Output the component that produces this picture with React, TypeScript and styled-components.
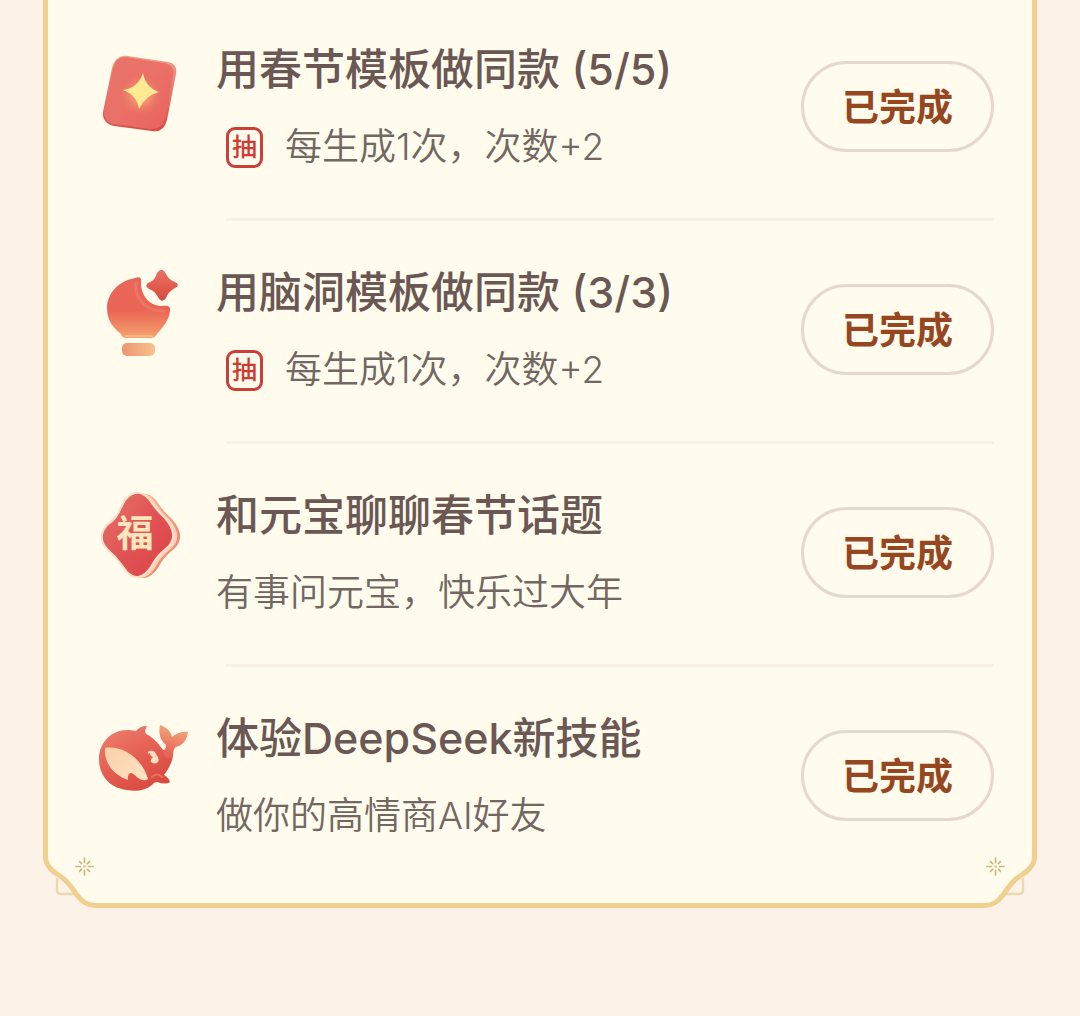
import React from "react";
import styled, { createGlobalStyle } from "styled-components";

const GlobalStyle = createGlobalStyle`
  *, *::before, *::after { box-sizing: border-box; }
  body {
    margin: 0;
    background: #fdf2e8;
    font-family: Inter, "Noto Sans CJK SC", sans-serif;
  }
`;

const Page = styled.main`
  padding: 0 43px 108px;
`;

const Card = styled.section`
  display: flex;
  flex-direction: column;
`;

const TaskList = styled.ul`
  margin: 0;
  padding: 0 38px 0 44px;
  list-style: none;
  background: #fffced;
  border: solid #f0cf8f;
  border-width: 0 5px;
`;

const TaskItem = styled.li`
  padding-top: 42px;

  &:first-child { padding-top: 40px; }

  &:not(:last-child)::after {
    content: "";
    display: block;
    height: 3px;
    margin: 46px 0 0 134px;
    background: #f9f0e6;
  }

  &:last-child { padding-bottom: 7px; }
`;

const TaskRow = styled.div`
  display: grid;
  grid-template-columns: 100px 1fr auto;
  column-gap: 24px;
  align-items: center;
`;

const Icon = styled.svg`
  display: block;
  width: 100px;
  height: 110px;
  align-self: start;
`;

const IconGlyph = styled.text`
  font-family: "Noto Sans CJK SC", sans-serif;
  font-size: 37px;
  font-weight: 700;
  text-anchor: middle;
`;

const TaskText = styled.div`
  display: flex;
  flex-direction: column;
  gap: 24px;
  min-width: 0;
`;

const Title = styled.h2`
  margin: 0;
  color: #6b5854;
  font-size: 43px;
  font-weight: 450;
  line-height: 58px;
  white-space: nowrap;
`;

const Detail = styled.p`
  display: flex;
  align-items: center;
  margin: 0;
  color: #726762;
  font-size: 37px;
  font-weight: 350;
  line-height: 50px;
  white-space: nowrap;
`;

const DrawBadge = styled.span`
  display: flex;
  align-items: center;
  justify-content: center;
  width: 37px;
  height: 41px;
  margin: 0 22px 0 10px;
  border: 3px solid #cb3f39;
  border-radius: 9px;
  color: #cf3a32;
  font-size: 25px;
  font-weight: 500;
  line-height: 35px;
`;

const DoneButton = styled.button`
  width: 193px;
  height: 91px;
  padding: 3px 0 0;
  border: 3px solid #e6d8cc;
  border-radius: 46px;
  background: transparent;
  color: #96471f;
  font-family: inherit;
  font-size: 37px;
  font-weight: 700;
  line-height: 50px;
`;

const CardFoot = styled.div`
  display: flex;
  height: 60px;
`;

const FootEdge = styled.div`
  flex: 1;
  background: #fffced;
  border-bottom: 5px solid #f0cf8f;
`;

const CornerArt = styled.svg<{ $mirrored?: boolean }>`
  display: block;
  width: 64px;
  height: 60px;
  transform: ${(p) => (p.$mirrored ? "scaleX(-1)" : "none")};
`;

function Corner({ mirrored }: { mirrored?: boolean }) {
  const edge =
    "M2.5 0V8C2.5 18 9 23 17 28C25 33 29 40 34 47C39 54 44 57.5 53 57.5H64";
  return (
    <CornerArt viewBox="0 0 64 60" $mirrored={mirrored} aria-hidden="true">
      <path d={`${edge}V0Z`} fill="#fffced" />
      <path d="M14 30V42Q14 46 18 46H32" fill="none" stroke="#e8dbb0" strokeWidth="2.4" />
      <path d={edge} fill="none" stroke="#f0cf8f" strokeWidth="5" />
      <g stroke="#cdb878" strokeWidth="1.7" strokeLinecap="round">
        {[0, 45, 90, 135, 180, 225, 270, 315].map((angle) => (
          <path
            key={angle}
            d={angle % 90 === 0 ? "M41.5 14.5V10" : "M41.5 14.5V11.5"}
            transform={`rotate(${angle} 41.5 18.5)`}
          />
        ))}
      </g>
      <circle cx="41.5" cy="18.5" r="1.2" fill="#d6c388" />
    </CornerArt>
  );
}

function TemplateIcon() {
  return (
    <Icon viewBox="0 0 100 110" aria-hidden="true">
      <defs>
        <linearGradient id="cardFace" x1="0" y1="0" x2="1" y2="1">
          <stop offset="0" stopColor="#e9746a" />
          <stop offset="0.5" stopColor="#ea7068" />
          <stop offset="1" stopColor="#e9625d" />
        </linearGradient>
        <linearGradient id="cardSide" x1="0" y1="0" x2="0" y2="1">
          <stop offset="0" stopColor="#f2a08e" />
          <stop offset="1" stopColor="#db4b45" />
        </linearGradient>
        <radialGradient id="cardGlow">
          <stop offset="0" stopColor="#ffd47a" stopOpacity="0.85" />
          <stop offset="1" stopColor="#f08a68" stopOpacity="0" />
        </radialGradient>
      </defs>
      <path d="M36 16L76 22Q86 24 84 34L75 80Q72 93 60 91L22 86Q10 83 11 72L20 28Q24 14 36 16Z" fill="url(#cardSide)" />
      <path d="M34 17L72 23Q83 25 81 35L72 80Q69 90 58 89L21 84Q11 81 12 71L21 28Q24 16 34 17Z" fill="url(#cardFace)" />
      <ellipse cx="49" cy="55" rx="21" ry="20" fill="url(#cardGlow)" />
      <path d="M51 33Q54 48 67 52Q53 56 47 69Q45 55 31 50Q46 48 51 33Z" fill="#ffea94" />
    </Icon>
  );
}

function IdeaIcon() {
  return (
    <Icon viewBox="0 0 100 110" aria-hidden="true">
      <defs>
        <linearGradient id="bulb" x1="0" y1="0" x2="0" y2="1">
          <stop offset="0" stopColor="#e8665a" />
          <stop offset="0.55" stopColor="#ea6555" />
          <stop offset="1" stopColor="#f5a36f" />
        </linearGradient>
        <linearGradient id="bulbBase" x1="0" y1="0" x2="1" y2="0">
          <stop offset="0" stopColor="#ed956e" />
          <stop offset="1" stopColor="#f9c28f" />
        </linearGradient>
        <linearGradient id="spark" x1="0" y1="0" x2="0" y2="1">
          <stop offset="0" stopColor="#ec7163" />
          <stop offset="1" stopColor="#d94840" />
        </linearGradient>
      </defs>
      <path d="M43 15C48 13 50 15 49 20C49 33 58 43 70 43C76 42 79 43 78 48C77 58 70 65 65 71C63 74 62 75 58 75H35C31 75 30 73 28 70C20 64 15 56 15 45C15 30 27 18 43 15Z" fill="url(#bulb)" />
      <path d="M44 20C42 35 54 49 72 48" fill="none" stroke="#f59a86" strokeWidth="3" strokeLinecap="round" opacity="0.3" />
      <path d="M34 73H60" stroke="#f8b883" strokeWidth="2" strokeLinecap="round" />
      <rect x="30" y="80" width="33" height="13" rx="5" fill="url(#bulbBase)" />
      <path d="M65 10Q70 3 74 11Q77 17 83 19Q89 22 83 25Q76 29 74 35Q70 41 66 34Q63 28 57 26Q51 22 58 19Q63 17 65 10Z" fill="url(#spark)" />
    </Icon>
  );
}

function FortuneIcon() {
  const tile =
    "M33 14Q45 0 57 13C62 20 64 24 73 32Q87 48 77 60C69 67 64 71 59 81Q47 98 35 86C29 79 27 73 16 64Q4 52 15 39C27 31 27 24 33 14Z";
  return (
    <Icon viewBox="0 0 100 110" aria-hidden="true">
      <defs>
        <linearGradient id="tileFace" x1="0" y1="0" x2="1" y2="1">
          <stop offset="0" stopColor="#e5776a" />
          <stop offset="0.5" stopColor="#e05355" />
          <stop offset="1" stopColor="#dc4248" />
        </linearGradient>
        <linearGradient id="tileSide" x1="0" y1="0" x2="1" y2="1">
          <stop offset="0" stopColor="#f9d3b8" />
          <stop offset="1" stopColor="#e7795e" />
        </linearGradient>
      </defs>
      <path d={tile} transform="translate(7 1)" fill="url(#tileSide)" />
      <path d={tile} transform="translate(4 1)" fill="#fbd3b8" />
      <path d={tile} fill="url(#tileFace)" stroke="#fbe0c8" strokeWidth="2" />
      <IconGlyph x="43" y="61" fill="#ffe6bd">福</IconGlyph>
    </Icon>
  );
}

function WhaleIcon() {
  return (
    <Icon viewBox="0 0 100 110" aria-hidden="true">
      <defs>
        <linearGradient id="whaleBody" x1="0" y1="0" x2="0.6" y2="1">
          <stop offset="0" stopColor="#ee8270" />
          <stop offset="0.6" stopColor="#e45d50" />
          <stop offset="1" stopColor="#d94b40" />
        </linearGradient>
        <linearGradient id="whaleTail" gradientUnits="userSpaceOnUse" x1="84" y1="18" x2="78" y2="44">
          <stop offset="0" stopColor="#f2a878" />
          <stop offset="1" stopColor="#e6665a" />
        </linearGradient>
        <linearGradient id="whaleBelly" x1="0" y1="0" x2="1" y2="1">
          <stop offset="0" stopColor="#fbd0a8" />
          <stop offset="1" stopColor="#fde3c1" />
        </linearGradient>
      </defs>
      <path d="M7 50C7 33 20 20 37 21L44 22Q48 17 55 17Q52 21 54 25C61 28 67 35 71 41H81C82 50 78 58 72 66Q77 69 78 73Q74 76 65 73Q62 73 60 76C54 81 45 83 35 81C17 79 7 66 7 50Z" fill="url(#whaleBody)" />
      <path d="M70 42Q74 41 74 36C69 32 66 25 68 16C74 18 79 22 80 28C84 24 91 22 96 23C95 31 91 36 84 38Q81 40 81 46Q79 50 74 48Z" fill="url(#whaleTail)" />
      <path d="M13 39C32 36 51 51 56 70Q52 73 46 69C43 66 41 64 38 64Q35 66 36 71C22 66 12 55 13 39Z" fill="url(#whaleBelly)" />
      <path d="M56 45Q55 42 58 42Q62 41 64 45Q68 50 66 53Q63 56 59 53Q58 50 61 48Q58 47 58 44Z" fill="#fde0bd" />
      <path d="M60 68Q65 63 70 68" fill="none" stroke="#ef8b72" strokeWidth="2" strokeLinecap="round" opacity="0.6" />
    </Icon>
  );
}

const tasks = [
  { title: "用春节模板做同款 (5/5)", detail: "每生成1次，次数+2", badge: true, art: TemplateIcon },
  { title: "用脑洞模板做同款 (3/3)", detail: "每生成1次，次数+2", badge: true, art: IdeaIcon },
  { title: "和元宝聊聊春节话题", detail: "有事问元宝，快乐过大年", badge: false, art: FortuneIcon },
  { title: "体验DeepSeek新技能", detail: "做你的高情商AI好友", badge: false, art: WhaleIcon },
];

export default function App() {
  return (
    <Page>
      <GlobalStyle />
      <Card>
        <TaskList>
          {tasks.map(({ title, detail, badge, art: Art }) => (
            <TaskItem key={title}>
              <TaskRow>
                <Art />
                <TaskText>
                  <Title>{title}</Title>
                  <Detail>
                    {badge && <DrawBadge>抽</DrawBadge>}
                    {detail}
                  </Detail>
                </TaskText>
                <DoneButton type="button">已完成</DoneButton>
              </TaskRow>
            </TaskItem>
          ))}
        </TaskList>
        <CardFoot>
          <Corner />
          <FootEdge />
          <Corner mirrored />
        </CardFoot>
      </Card>
    </Page>
  );
}
